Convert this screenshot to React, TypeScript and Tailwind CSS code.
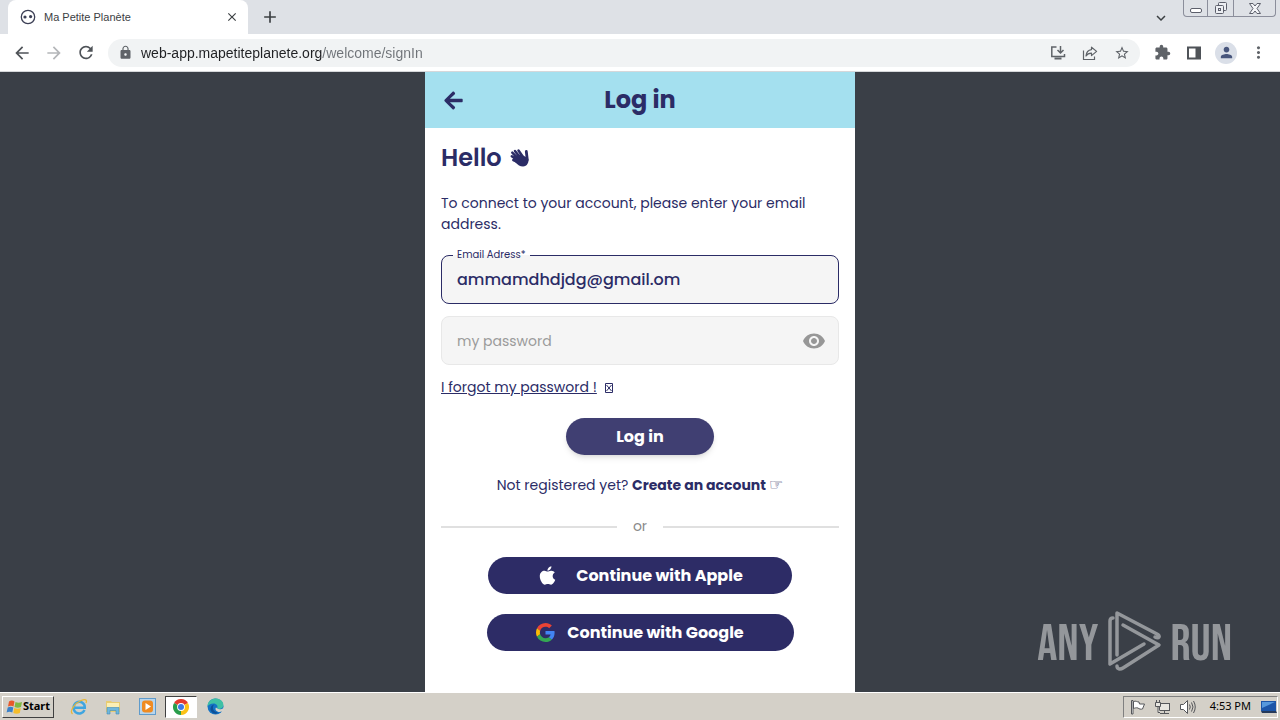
import { ReactNode, useState } from 'react';
import { FaApple, FaArrowLeft } from 'react-icons/fa';
import {
  MdAdd,
  MdArrowBack,
  MdArrowForward,
  MdClose,
  MdExpandMore,
  MdExtension,
  MdLock,
  MdMoreVert,
  MdPerson,
  MdRefresh,
  MdStarBorder,
  MdVisibility,
} from 'react-icons/md';

interface IconButtonProps {
  label: string;
  children: ReactNode;
  className?: string;
}

function IconButton({ label, children, className = '' }: IconButtonProps) {
  return (
    <button type="button" aria-label={label} className={`flex shrink-0 items-center justify-center ${className}`}>
      {children}
    </button>
  );
}

function Favicon() {
  return (
    <svg width="16" height="16" viewBox="0 0 16 16" fill="none" stroke="#3c3f55">
      <circle cx="8" cy="8" r="6.7" strokeWidth="1.3" />
      <circle cx="5" cy="8" r="1.6" fill="#3c3f55" stroke="none" />
      <circle cx="10.6" cy="7.6" r="1.6" fill="#3c3f55" stroke="none" />
    </svg>
  );
}

function InstallIcon() {
  return (
    <svg width="16" height="16" viewBox="0 0 16 16" fill="none" stroke="#5f6368" strokeWidth="1.5">
      <path d="M6.500 2H1.800v9.500h12.700V9" />
      <path d="M4.500 13.500h7" strokeWidth="2" />
      <path d="M10.500 1v6.500M7.500 5L10.500 8l3-3" />
    </svg>
  );
}

function ShareIcon() {
  return (
    <svg width="16" height="16" viewBox="0 0 16 16" fill="none" stroke="#5f6368" strokeWidth="1.2">
      <path d="M1.500 5.500v9h11v-3" />
      <path d="M9.500 2.200L14.600 6.400L9.500 10.600V8.200C7 8.200 5.200 9 4 11C4.300 7.400 6.200 5 9.500 4.600Z" strokeLinejoin="round" />
    </svg>
  );
}

function SidePanelIcon() {
  return (
    <svg width="16" height="16" viewBox="0 0 16 16">
      <rect x="2" y="2.500" width="12" height="11" fill="none" stroke="#4f5358" strokeWidth="2" />
      <rect x="9.500" y="2" width="5" height="12" fill="#4f5358" />
    </svg>
  );
}

function WavingHand() {
  return (
    <svg width="20" height="20" viewBox="0 0 20 20" fill="none" stroke="currentColor" strokeLinecap="round">
      <path d="M7.500 9.500L10 6L15 8.500L18 10.500C19.500 14 17 18.500 13 18.500C10 18.500 8 17 5 14Z" fill="currentColor" stroke="none" />
      <path d="M10.500 10L5 3M8.500 11L2.300 4.700M8 12.500L1.800 8.300M9 14.500L3.300 12M13 9L8.500 2.500" strokeWidth="2.500" />
      <path d="M17.300 12L16.300 3.500" strokeWidth="2.800" />
    </svg>
  );
}

function WindowControls() {
  return (
    <div className="mr-1 flex h-[17px] self-start rounded-b border border-t-0 border-[#8b8e9b] text-[#5c5f6b]">
      <IconButton label="Minimize" className="w-6 border-r border-[#8b8e9b]">
        <svg width="14" height="14" viewBox="0 0 14 14" fill="none" stroke="currentColor">
          <rect x="1.500" y="7.500" width="11" height="4" rx="1.500" fill="#fff" />
        </svg>
      </IconButton>
      <IconButton label="Restore" className="w-[26px] border-r border-[#8b8e9b]">
        <svg width="14" height="14" viewBox="0 0 14 14" fill="#eceef2" stroke="currentColor">
          <rect x="4.500" y="1.500" width="8" height="8" rx="1" />
          <rect x="1.500" y="4.500" width="8" height="8" rx="1" />
          <rect x="4.500" y="7.500" width="2" height="2" />
        </svg>
      </IconButton>
      <IconButton label="Close window" className="w-[41px]">
        <svg width="14" height="13" viewBox="0 0 14 13" fill="#f4f5f8" stroke="currentColor">
          <path d="M1.500 1.500H5L7 4L9 1.500H12.500L9 6.500L12.500 11.500H9L7 9L5 11.500H1.500L5 6.500Z" />
        </svg>
      </IconButton>
    </div>
  );
}

function TabStrip() {
  return (
    <div className="flex h-[34px] items-end bg-[#dee1e6]">
      <div className="ml-2 flex h-[34px] w-60 items-center rounded-t-lg bg-white pr-2 pl-3">
        <Favicon />
        <span className="ml-2 flex-1 truncate text-[11px] text-[#3c4043]">Ma Petite Planète</span>
        <IconButton label="Close tab" className="size-4 text-[#3c4043]">
          <MdClose size={14} />
        </IconButton>
      </div>
      <IconButton label="New tab" className="ml-3 h-[34px] w-5 text-[#3c4043]">
        <MdAdd size={20} />
      </IconButton>
      <IconButton label="Search tabs" className="mr-3 ml-auto h-8 w-5 text-[#3c4043]">
        <MdExpandMore size={18} />
      </IconButton>
      <WindowControls />
    </div>
  );
}

function Toolbar() {
  const [url, setUrl] = useState('web-app.mapetiteplanete.org/welcome/signIn');

  return (
    <div className="flex h-[38px] items-center border-b border-[#d5d7da] bg-white pr-[11px] pl-3 text-[#5f6368]">
      <IconButton label="Back" className="size-5 text-[#4f5358]">
        <MdArrowBack size={20} />
      </IconButton>
      <IconButton label="Forward" className="ml-3 size-5 text-[#b4b6b9]">
        <MdArrowForward size={20} />
      </IconButton>
      <IconButton label="Reload" className="ml-3 size-5 text-[#4f5358]">
        <MdRefresh size={21} />
      </IconButton>
      <div className="ml-3 flex h-7 flex-1 items-center rounded-full bg-[#f1f3f4] px-2.5">
        <MdLock size={15} className="shrink-0" />
        <input
          aria-label="Address"
          value={url}
          onChange={(e) => setUrl(e.target.value)}
          className="ml-2 min-w-0 flex-1 bg-[linear-gradient(to_right,#202124_181px,#6f7378_181px)] bg-clip-text text-sm text-transparent caret-black outline-none"
        />
        <div className="flex items-center gap-4">
          <IconButton label="Install app" className="size-4">
            <InstallIcon />
          </IconButton>
          <IconButton label="Share" className="size-4">
            <ShareIcon />
          </IconButton>
          <IconButton label="Bookmark" className="size-4">
            <MdStarBorder size={18} />
          </IconButton>
        </div>
      </div>
      <div className="ml-[11px] flex items-center gap-2.5">
        <IconButton label="Extensions" className="size-[22px]">
          <MdExtension size={17} />
        </IconButton>
        <IconButton label="Side panel" className="size-[22px]">
          <SidePanelIcon />
        </IconButton>
        <IconButton label="Profile" className="size-[22px] rounded-full bg-[#dadfe8] text-[#47557c]">
          <MdPerson size={17} />
        </IconButton>
        <IconButton label="Menu" className="size-[22px]">
          <MdMoreVert size={19} />
        </IconButton>
      </div>
    </div>
  );
}

function GoogleLogo() {
  return (
    <svg width="19" height="19" viewBox="0 0 48 48">
      <path fill="#ea4335" d="M24 9.500c3.540 0 6.710 1.220 9.210 3.600l6.850-6.850C35.900 2.380 30.470 0 24 0 14.620 0 6.510 5.380 2.560 13.220l7.980 6.190C12.430 13.720 17.740 9.500 24 9.500z" />
      <path fill="#4285f4" d="M46.980 24.550c0-1.570-.15-3.090-.38-4.550H24v9.020h12.940c-.58 2.960-2.260 5.480-4.780 7.180l7.730 6c4.510-4.180 7.090-10.360 7.090-17.650z" />
      <path fill="#fbbc05" d="M10.530 28.590c-.48-1.450-.76-2.990-.76-4.590s.27-3.140.76-4.590l-7.980-6.190C.92 16.460 0 20.120 0 24s.92 7.540 2.560 10.780l7.970-6.190z" />
      <path fill="#34a853" d="M24 48c6.480 0 11.930-2.130 15.890-5.810l-7.730-6c-2.150 1.450-4.920 2.300-8.160 2.300-6.260 0-11.570-4.220-13.470-9.910l-7.980 6.190C6.510 42.620 14.620 48 24 48z" />
    </svg>
  );
}

function LoginPage() {
  const [email, setEmail] = useState('ammamdhdjdg@gmail.om');
  const [password, setPassword] = useState('');

  return (
    <div className="mx-auto flex w-full max-w-[430px] flex-col bg-white font-['Poppins','Inter',sans-serif] text-[#2b2c66]">
      <header className="grid h-14 grid-cols-[40px_1fr_40px] items-center bg-[#a4e0ef] px-4">
        <IconButton label="Go back" className="size-6">
          <FaArrowLeft size={21} />
        </IconButton>
        <h1 className="text-center text-2xl font-bold">Log in</h1>
      </header>

      <div className="flex flex-col px-4 pt-3">
        <h2 className="flex h-9 items-center gap-2 text-2xl font-semibold">
          Hello
          <WavingHand />
        </h2>
        <p className="mt-[17px] text-sm leading-[21px]">To connect to your account, please enter your email address.</p>

        <form className="flex flex-col" onSubmit={(e) => e.preventDefault()}>
          <fieldset className="mt-3 rounded-lg border border-[#2b2c66] bg-[#f5f5f5] px-[11px]">
            <legend className="px-1 text-[10px] leading-4">
              <label htmlFor="email">Email Adress*</label>
            </legend>
            <input
              id="email"
              type="email"
              value={email}
              onChange={(e) => setEmail(e.target.value)}
              className="mb-2 block h-8 w-full bg-transparent px-1 text-base font-medium outline-none"
            />
          </fieldset>

          <div className="mt-3 flex h-[49px] items-center rounded-lg border border-[#e8e8e8] bg-[#f5f5f5] pr-3 pl-[15px]">
            <input
              type="password"
              aria-label="Password"
              placeholder="my password"
              value={password}
              onChange={(e) => setPassword(e.target.value)}
              className="min-w-0 flex-1 bg-transparent text-sm outline-none placeholder:text-[#9b9b9b]"
            />
            <IconButton label="Show password" className="size-6 text-[#979797]">
              <MdVisibility size={24} />
            </IconButton>
          </div>

          <div className="mt-3 flex items-center gap-2 text-sm leading-[21px]">
            <a href="#forgot" className="underline">
              I forgot my password !
            </a>
            <svg width="8" height="10" viewBox="0 0 8 10" fill="none" stroke="currentColor">
              <path d="M.5 .5h7v9h-7zM1.500 2l5 6M6.500 2l-5 6" />
            </svg>
          </div>

          <button
            type="submit"
            className="mt-5 h-[37px] w-[148px] self-center rounded-full bg-[#403f72] font-bold text-white shadow-md"
          >
            Log in
          </button>
        </form>

        <p className="mt-5 text-center text-sm leading-[21px]">
          Not registered yet?{' '}
          <a href="#create" className="font-bold">
            Create an account{' '}
            <span className="font-['DejaVu_Sans',sans-serif] text-base leading-none">☞</span>
          </a>
        </p>

        <div className="mt-5 flex items-center gap-4 text-sm leading-[21px] text-[#8a8a8a]">
          <span className="h-0.5 flex-1 bg-[#e0e0e0]" />
          or
          <span className="h-0.5 flex-1 bg-[#e0e0e0]" />
        </div>

        <div className="mt-5 flex flex-col items-center gap-5 text-base font-bold text-white">
          <button type="button" className="flex h-[37px] w-[304px] items-center justify-center gap-[18px] rounded-full bg-[#2d2c66]">
            <FaApple size={21} />
            Continue with Apple
          </button>
          <button type="button" className="flex h-[37px] w-[307px] items-center justify-center gap-3 rounded-full bg-[#2d2c66]">
            <GoogleLogo />
            Continue with Google
          </button>
        </div>
      </div>
    </div>
  );
}

function Watermark() {
  return (
    <div className="absolute right-12 bottom-[18px] flex items-center gap-2 font-['Bebas_Neue','Oswald','Roboto_Condensed','Liberation_Sans_Narrow',sans-serif] text-[50px] leading-none text-[#94979b]">
      <span className="pt-1.5">ANY</span>
      <svg width="56" height="64" viewBox="0 0 56 64" fill="none" stroke="currentColor" strokeWidth="3.500" strokeLinejoin="round" strokeLinecap="round">
        <path d="M38 34L4 54V11C4 9 5 8 7 8" />
        <path d="M11 45V3L51 24C55 26 53 29 49 27" />
        <path d="M17 15L53 35L17 58C14 60 11 59 11 56" />
      </svg>
      <span className="pt-1.5">RUN</span>
    </div>
  );
}

function StartFlag() {
  return (
    <svg width="17" height="16" viewBox="0 0 17 16">
      <path d="M3 2.500C5 1 7 1.500 8.500 2.500L7.500 7.500C6 6.500 4 6.500 2 7.500Z" fill="#e8592b" />
      <path d="M9.500 3C11.500 4 13.500 4 16 3L15 8C13 9 10.500 9 8.500 8Z" fill="#7fb942" />
      <path d="M1.700 8.500C3.500 7.500 5.500 7.500 7.300 8.500L6.300 13.500C4.500 12.500 2.500 12.500 .6 13.500Z" fill="#3a80c9" />
      <path d="M8.300 9C10.500 10 12.500 10 14.800 9L13.800 14C12 15 9.500 15 7.300 14Z" fill="#f5bd2b" />
    </svg>
  );
}

function InternetExplorerIcon() {
  return (
    <svg width="18" height="18" viewBox="0 0 18 18" fill="none">
      <path d="M14.500 12C13 15.500 9 16.500 6 14.500C2.500 12 3 6.500 6.500 4.500C10.500 2.500 15 5 14.800 9.700H5" stroke="#3fa5e0" strokeWidth="2.500" />
      <path d="M2.500 16C-1 13 5 5 11 2.500C15 .8 17.500 1.500 16 5" stroke="#e8b738" strokeWidth="1.300" />
    </svg>
  );
}

function ExplorerIcon() {
  return (
    <svg width="18" height="18" viewBox="0 0 18 18">
      <path d="M2 3h5l1 1h8v10H2z" fill="#e8cc72" />
      <path d="M3 5h12v5H3z" fill="#fbefb5" />
      <path d="M3 16V9.500h12V16h-3v-3.500H6V16z" fill="#6fb7dc" stroke="#428bb5" strokeWidth=".6" />
    </svg>
  );
}

function MediaPlayerIcon() {
  return (
    <svg width="17" height="17" viewBox="0 0 17 17">
      <rect x=".5" y=".5" width="16" height="16" fill="#b8d5ec" stroke="#5f9bcb" />
      <rect x="3" y="2.500" width="11" height="12" rx="3" fill="#ef8b22" />
      <path d="M6.500 5v7l5.500-3.500z" fill="#fff" />
    </svg>
  );
}

function ChromeIcon() {
  return (
    <svg width="16" height="16" viewBox="0 0 16 16">
      <path d="M8 8L1.070 4A8 8 0 0 1 14.930 4Z" fill="#e33b2e" />
      <path d="M8 8L14.930 4A8 8 0 0 1 8 16Z" fill="#fbc116" />
      <path d="M8 8V16A8 8 0 0 1 1.070 4Z" fill="#299d4b" />
      <circle cx="8" cy="8" r="3.900" fill="#fff" />
      <circle cx="8" cy="8" r="3" fill="#3c79e6" />
    </svg>
  );
}

function EdgeIcon() {
  return (
    <svg width="17" height="17" viewBox="0 0 17 17">
      <circle cx="8.500" cy="8.500" r="8" fill="#1473c5" />
      <path d="M.5 8.500C.5 3 5 .5 9 .5C14 .5 17 4.500 16.300 8C15.700 11 11.500 11.500 10 10.300C11.500 8 9.500 5.500 6.500 5.500C3.500 5.500 1 7 .5 8.500Z" fill="#3fc0a5" />
      <path d="M6 9C5.500 12 8 14.500 11.500 14.500C8 17.500 3 14.500 3.500 10.500C3.800 8 6 6.500 7.500 6.500C6.500 7 6 8 6 9Z" fill="#0d4f97" />
      <path d="M10 10.300C12 12 15 11.300 16.500 9.700L17 13L12.500 14C9.500 14 7.500 11.500 9 9.500Z" fill="#d6d2ca" />
    </svg>
  );
}

const taskbarApps = [
  { name: 'Internet Explorer', icon: <InternetExplorerIcon />, active: false },
  { name: 'Windows Explorer', icon: <ExplorerIcon />, active: false },
  { name: 'Media Player', icon: <MediaPlayerIcon />, active: false },
  { name: 'Google Chrome', icon: <ChromeIcon />, active: true },
  { name: 'Microsoft Edge', icon: <EdgeIcon />, active: false },
];

function SystemTray() {
  return (
    <div className="ml-auto flex h-[22px] items-center border border-t-[#808080] border-r-white border-b-white border-l-[#808080] pl-1.5">
      <div className="flex items-center gap-2 text-[#55565a]">
        <svg width="16" height="16" viewBox="0 0 16 16" fill="#fff" stroke="currentColor">
          <path d="M1.500 1.500h1.500v13.500H1.500zM3.500 2.500C6 1.500 7 3 9 3L9.500 5H14.500L12.500 10C11 10.500 9 10 8 9C6 8.500 5 9 3.500 9.500Z" />
        </svg>
        <svg width="17" height="16" viewBox="0 0 17 16" fill="#e8e6e1" stroke="currentColor">
          <rect x="5.500" y="4.500" width="10" height="7" />
          <path d="M6 14.500h9M10.500 12v2" />
          <path d="M1.500 3.500h5v4h-5zM2.500 1v2.500M5.500 1v2.500M4 7.500v6h2" />
        </svg>
        <svg width="17" height="16" viewBox="0 0 17 16" fill="none" stroke="currentColor">
          <path d="M1.500 5.500h3l4-4v13l-4-4h-3z" fill="#fff" />
          <path d="M10.500 5.500q1.500 2.500 0 5M12.500 3.500q3 4.500 0 9M14.500 2q3.500 6 0 12" />
        </svg>
      </div>
      <time className="ml-3.5 text-[11px] text-black">4:53 PM</time>
      <svg width="16" height="14" viewBox="0 0 16 14" className="ml-2.5">
        <path d="M0 1h15v10H0z" fill="#1c55a8" />
        <path d="M1 2h13L1 8z" fill="#5698dc" />
        <path d="M0 11h15l1 2H1z" fill="#263a5b" />
      </svg>
    </div>
  );
}

function Taskbar() {
  return (
    <footer className="flex h-7 items-center border-t border-white bg-[#d4d0c8] px-0.5 font-['Tahoma','Noto_Sans',sans-serif]">
      <button
        type="button"
        className="flex h-[22px] w-[52px] items-center justify-center border border-t-white border-r-[#404040] border-b-[#404040] border-l-white text-[11px] font-bold text-black"
      >
        <StartFlag />
        Start
      </button>
      <div className="ml-[9px] flex items-center gap-0.5">
        {taskbarApps.map((app) => (
          <IconButton
            key={app.name}
            label={app.name}
            className={
              app.active
                ? 'h-[22px] w-8 border border-t-[#404040] border-r-white border-b-white border-l-[#404040] bg-white'
                : 'h-[22px] w-8'
            }
          >
            {app.icon}
          </IconButton>
        ))}
      </div>
      <SystemTray />
    </footer>
  );
}

export default function App() {
  return (
    <div className="flex min-h-screen flex-col bg-[#3a3f47] font-['Tahoma','Liberation_Sans',sans-serif]">
      <TabStrip />
      <Toolbar />
      <main className="relative flex flex-1">
        <LoginPage />
        <Watermark />
      </main>
      <Taskbar />
    </div>
  );
}
